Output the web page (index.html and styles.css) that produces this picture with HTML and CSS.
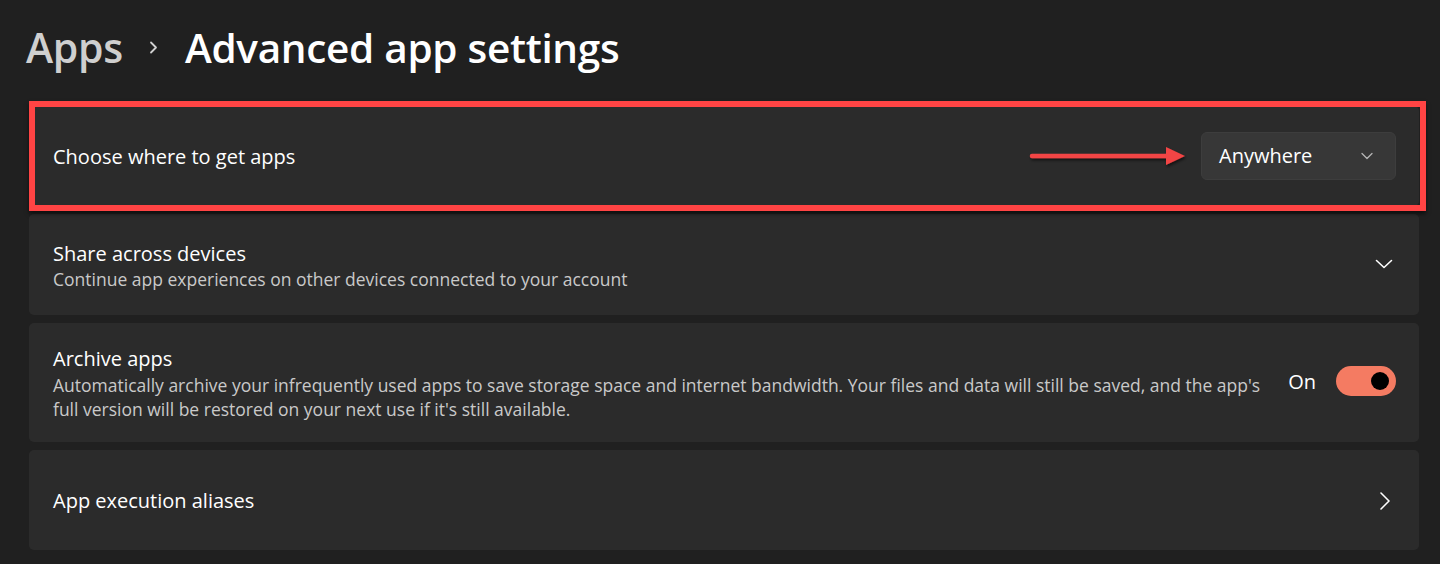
FILE: index.html
```html
<!DOCTYPE html>
<html lang="en">
<head>
<meta charset="utf-8">
<title>Advanced app settings</title>
<link rel="stylesheet" href="styles.css">
</head>
<body>
<div class="page">
  <header class="breadcrumb">
    <span class="crumb-parent">Apps</span>
    <svg class="crumb-sep" width="9" height="13" viewBox="0 0 9 13"><polyline points="2,1.5 7,6.5 2,11.5" fill="none" stroke="#d0d0d0" stroke-width="1.8" stroke-linecap="round" stroke-linejoin="round"/></svg>
    <h1 class="crumb-current">Advanced app settings</h1>
  </header>

  <main class="cards">
    <section class="card card-first">
      <div class="card-text">
        <div class="card-title">Choose where to get apps</div>
      </div>
      <button class="dropdown">
        <span>Anywhere</span>
        <svg width="12" height="8" viewBox="0 0 12 8"><polyline points="1,1.5 6,6.5 11,1.5" fill="none" stroke="#b5b5b5" stroke-width="1.3" stroke-linecap="round" stroke-linejoin="round"/></svg>
      </button>
    </section>

    <section class="card card-second">
      <div class="card-text">
        <div class="card-title">Share across devices</div>
        <div class="card-desc">Continue app experiences on other devices connected to your account</div>
      </div>
      <svg class="icon-down" width="18" height="10" viewBox="0 0 18 10"><polyline points="1.5,1.5 9,8.5 16.5,1.5" fill="none" stroke="#ffffff" stroke-width="1.6" stroke-linecap="round" stroke-linejoin="round"/></svg>
    </section>

    <section class="card card-third">
      <div class="card-text">
        <div class="card-title">Archive apps</div>
        <div class="card-desc">Automatically archive your infrequently used apps to save storage space and internet bandwidth. Your files and data will still be saved, and the app's full version will be restored on your next use if it's still available.</div>
      </div>
      <div class="toggle-group">
        <span class="toggle-label">On</span>
        <span class="toggle"><span class="knob"></span></span>
      </div>
    </section>

    <section class="card card-fourth">
      <div class="card-text">
        <div class="card-title">App execution aliases</div>
      </div>
      <svg class="icon-right" width="12" height="20" viewBox="0 0 12 20"><polyline points="2,2 10,10 2,18" fill="none" stroke="#ffffff" stroke-width="1.6" stroke-linecap="round" stroke-linejoin="round"/></svg>
    </section>

    <div class="highlight"></div>
    <svg class="arrow" width="160" height="24" viewBox="0 0 160 24">
      <defs>
        <filter id="sh" x="-10%" y="-50%" width="120%" height="200%">
          <feDropShadow dx="1" dy="2" stdDeviation="1.5" flood-color="#000" flood-opacity="0.6"/>
        </filter>
      </defs>
      <g filter="url(#sh)">
        <line x1="3" y1="11" x2="140" y2="11" stroke="#f24444" stroke-width="4.5" stroke-linecap="round"/>
        <polygon points="137,2 156,11 137,20" fill="#f24444"/>
      </g>
    </svg>
  </main>
</div>
</body>
</html>
```

FILE: styles.css
```css
* { box-sizing: border-box; }

html, body {
  margin: 0;
  padding: 0;
  background: #202020;
  height: 100%;
}

body {
  font-family: "Open Sans", "Noto Sans", "Liberation Sans", sans-serif;
  color: #ffffff;
  overflow: hidden;
}

.page {
  padding: 0 21px 0 29px;
}

.breadcrumb {
  height: 101px;
  display: flex;
  align-items: center;
  padding-bottom: 7px;
  margin-left: -3px;
}

.crumb-parent {
  font-size: 41px;
  font-weight: 600;
  color: #cfcfcf;
  letter-spacing: -0.3px;
}

.crumb-sep {
  margin: 0 27px 0 26px;
}

.crumb-current {
  margin: 0;
  font-size: 40.5px;
  font-weight: 600;
  color: #ffffff;
  letter-spacing: -0.3px;
}

.cards {
  position: relative;
  display: flex;
  flex-direction: column;
  gap: 8px;
  padding-top: 5px;
}

.card {
  background: #2b2b2b;
  border-radius: 5px;
  display: flex;
  align-items: center;
  gap: 24px;
  padding: 0 23px 0 24px;
}

.card-first { height: 100px; }
.card-second { height: 101px; }
.card-third { height: 119px; }
.card-fourth { height: 100px; }

.card-text {
  flex: 1;
  min-width: 0;
  padding-top: 2px;
}

.card-title {
  font-size: 20px;
  line-height: 26px;
  color: #ffffff;
}

.card-desc {
  font-size: 17.5px;
  line-height: 24px;
  color: #c9c9c9;
}

.card-third .card-title {
  margin-bottom: 1px;
}

.card-third .card-desc {
  max-width: 1212px;
}

.dropdown {
  width: 195px;
  height: 48px;
  background: #373737;
  border: 1px solid #3d3d3d;
  border-radius: 6px;
  display: flex;
  align-items: center;
  justify-content: space-between;
  padding: 0 22px 0 17px;
  font-family: inherit;
  font-size: 20px;
  color: #ffffff;
  margin-top: -1px;
}

.icon-down {
  margin-right: 3px;
  margin-top: -2px;
}

.icon-right {
  margin-right: 5px;
  margin-top: 2px;
}

.toggle-group {
  display: flex;
  align-items: center;
  gap: 20px;
  margin-top: -3px;
}

.toggle-label {
  font-size: 20px;
  color: #ffffff;
}

.toggle {
  width: 60px;
  height: 30px;
  border-radius: 15px;
  background: #f47b62;
  display: flex;
  align-items: center;
  justify-content: flex-end;
  padding-right: 7px;
}

.knob {
  width: 18px;
  height: 18px;
  border-radius: 50%;
  background: #000000;
}

.highlight {
  position: absolute;
  left: 0;
  top: 0;
  width: 1397px;
  height: 110px;
  border: 6px solid #ff4444;
  box-shadow: 0 3px 4px rgba(0, 0, 0, 0.55);
  pointer-events: none;
}

.arrow {
  position: absolute;
  left: 1000px;
  top: 44px;
}
```
